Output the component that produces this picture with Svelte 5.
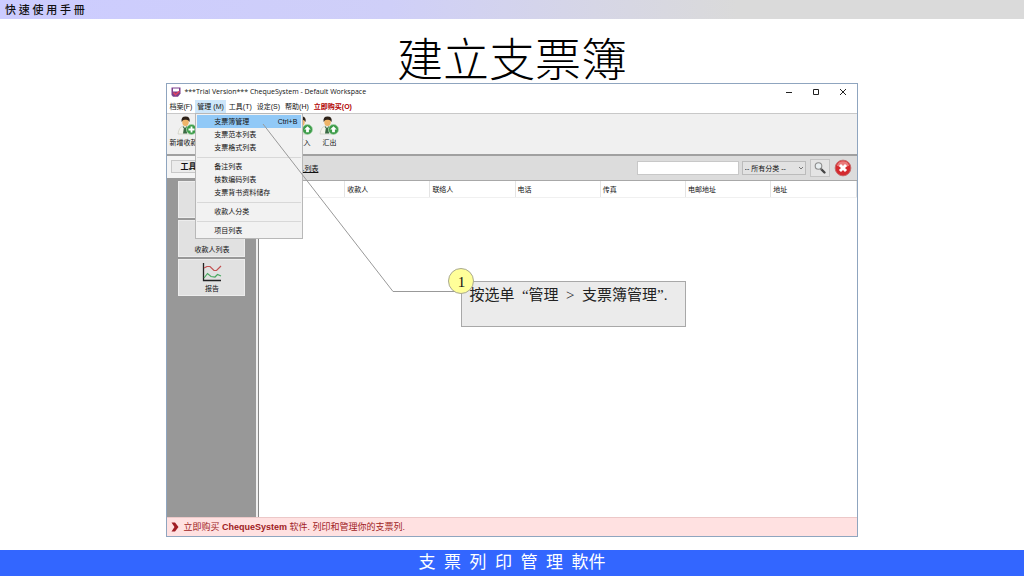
<script lang="ts">
	type MenuItem = { label: string; shortcut?: string; active?: boolean };

	const menus = ['工具(T)', '设定(S)', '帮助(H)'];

	const groups: MenuItem[][] = [
		[{ label: '支票簿管理', shortcut: 'Ctrl+B', active: true }, { label: '支票范本列表' }, { label: '支票格式列表' }],
		[{ label: '备注列表' }, { label: '核数编码列表' }, { label: '支票背书资料储存' }],
		[{ label: '收款人分类' }],
		[{ label: '项目列表' }]
	];

	const columns = ['', '收款人', '联络人', '电话', '传真', '电邮地址', '地址'];

	let query = $state('');
	let category = $state('all');
</script>

{#snippet person(sign: string)}
	<svg class="person" viewBox="0 0 20 20" aria-hidden="true">
		<path d="M1 18q1-7 5-8h4q5 1 5 8z" fill="#f4f4ec" stroke="#c4c4b8" stroke-width=".6" />
		<path d="M6 10l2 2L10 10l.4 1.200-1 1 .7 5.300H6l.8-5.300-1-1z" fill="#3c6b46" />
		<ellipse cx="8.500" cy="5.800" rx="3.300" ry="4.200" fill="#efb468" />
		<path d="M4.600 6Q3.800.6 8.600.6T12.600 6Q11 3.300 8.500 3.800 6 3.300 4.600 6z" fill="#2c2118" />
		<circle cx="14.500" cy="13.500" r="5" fill="#3c9b49" stroke="#a9d8ad" stroke-width=".7" />
		{#if sign === 'plus'}
			<path d="M14.500 10.500v6M11.500 13.500h6" stroke="#fff" stroke-width="1.800" />
		{:else}
			<path d="M14.500 10.200l3.300 3.400h-1.900v2.600h-2.800v-2.600h-1.900z" fill="#fff" />
		{/if}
	</svg>
{/snippet}

<div class="page">
	<header class="top">快 速 使 用 手 冊</header>
	<h1>建立支票簿</h1>

	<main class="window">
		<div class="titlebar">
			<svg class="logo" viewBox="0 0 10 10" aria-hidden="true">
				<path d="M.5.500h9v6L7 9.700H2L.5 8z" fill="#7b3f8c" />
				<path d="M2 1.500h6v3H2z" fill="#fff" />
				<path d="M2.500 5.500l2 2.300 4-3.600" fill="none" stroke="#e4445f" stroke-width="1.500" />
			</svg>
			<span class="caption">***Trial Version*** ChequeSystem - Default Workspace</span>
			<button aria-label="Minimize"><svg viewBox="0 0 8 8"><path d="M1 4.500h6" /></svg></button>
			<button aria-label="Maximize"><svg viewBox="0 0 8 8"><path d="M1.500 1.500h5v5h-5z" /></svg></button>
			<button aria-label="Close"><svg viewBox="0 0 8 8"><path d="M1 1l6 6M7 1L1 7" /></svg></button>
		</div>

		<nav class="menubar">
			<button>档案(F)</button>
			<div class="menu-anchor">
				<button class="open" aria-expanded="true">管理 (M)</button>
				<div class="dropdown" role="menu">
					{#each groups as group}
						<div class="group">
							{#each group as item}
								<button role="menuitem" class:active={item.active}>
									<span>{item.label}</span>
									{#if item.shortcut}<span>{item.shortcut}</span>{/if}
								</button>
							{/each}
						</div>
					{/each}
				</div>
			</div>
			{#each menus as menu}
				<button>{menu}</button>
			{/each}
			<button class="buy">立即购买(O)</button>
		</nav>

		<div class="toolbar">
			<button>{@render person('plus')}新增收款人</button>
			<button class="import">{@render person('up')}汇入</button>
			<button>{@render person('up')}汇出</button>
		</div>

		<div class="body">
			<aside>
				<div class="tab"><span>工具列</span></div>
				<div class="tools">
					<button aria-label="支票"></button>
					<button>收款人列表</button>
					<button>
						<svg class="chart" viewBox="0 0 20 20" aria-hidden="true">
							<path d="M1.500 1v17.500H19" fill="none" stroke="#222" stroke-width="1.300" />
							<path d="M2 6l3-1.500h3l4 4h2.500L19 4" fill="none" stroke="#c25050" stroke-width="1.200" />
							<path d="M2 16l3.500-4.500L9 14.500l4 .5 2.500-2.500L19 14" fill="none" stroke="#48a860" stroke-width="1.200" />
						</svg>
						报告
					</button>
				</div>
			</aside>

			<section>
				<div class="filter">
					<a href="#payees">收款人列表</a>
					<input type="text" aria-label="搜寻" bind:value={query} />
					<div class="select">
						<select aria-label="分类" bind:value={category}>
							<option value="all">-- 所有分类 --</option>
						</select>
						<svg viewBox="0 0 6 6" aria-hidden="true"><path d="M1 2l2 2 2-2" /></svg>
					</div>
					<button class="search" aria-label="搜寻">
						<svg viewBox="0 0 14 14">
							<path d="M8.500 8.500l3 3" stroke="#444" stroke-width="2.400" stroke-linecap="round" />
							<circle cx="5.500" cy="5" r="3.300" fill="#e8eef0" stroke="#8c8c8c" stroke-width="1.100" />
							<path d="M7.500 7.200l1.200 1.300" stroke="#777" stroke-width="1.200" />
						</svg>
					</button>
					<button class="clear" aria-label="清除">
						<svg viewBox="0 0 16 16">
							<circle cx="8" cy="8" r="7" fill="#d42a2e" stroke="#c46a6a" stroke-width=".8" />
							<path d="M2.500 6a5.800 5.800 0 0111 0Q8 8.500 2.500 6z" fill="#ea7c7c" />
							<path d="M5.300 5.300l5.400 5.400M10.700 5.300l-5.400 5.400" stroke="#fff" stroke-width="2.600" />
						</svg>
					</button>
				</div>
				<table>
					<thead>
						<tr>
							{#each columns as column}
								<th scope="col">{column}</th>
							{/each}
						</tr>
					</thead>
				</table>
			</section>
		</div>

		<div class="status">
			<svg viewBox="0 0 8 10" aria-hidden="true"><path d="M.5.500H4L7.500 5 4 9.500H.5L3.500 5z" fill="#a01c24" /></svg>
			<span>立即购买 <b>ChequeSystem</b> 软件. 列印和管理你的支票列.</span>
		</div>

		<svg class="leader" viewBox="0 0 200 170" aria-hidden="true"><path d="M1 1l130 167.500h68" /></svg>
		<div class="callout">
			<span class="step">1</span>
			<p>按选单&nbsp; “管理&nbsp; &gt; &nbsp;支票簿管理”.</p>
		</div>
	</main>

	<footer>支&ensp;票&ensp;列&ensp;印&ensp;管&ensp;理&ensp;軟件</footer>
</div>

<style>
	:global(body) {
		background: #fff;
	}
	.page {
		display: flex;
		flex-direction: column;
		min-height: 100vh;
		color: #111;
		font: 7px/13px 'Liberation Sans', 'Noto Sans CJK SC', sans-serif;
	}
	button,
	input,
	select {
		margin: 0;
		padding: 0;
		border: 0;
		background: none;
		color: inherit;
		font: inherit;
	}
	svg {
		display: block;
	}
	.top {
		padding: 1px 5px 0;
		background: linear-gradient(90deg, #ccf 0%, #cfcff8 38%, #d6d6e6 58%, #dadada 72%, #dadada 100%);
		font: 500 11px/18px 'Liberation Serif', 'Noto Sans CJK TC', serif;
	}
	h1 {
		margin: 10px 0 0;
		color: #000;
		text-align: center;
		font: 300 46px/54px 'Noto Sans CJK SC', sans-serif;
	}

	.window {
		position: relative;
		flex: 1;
		display: flex;
		flex-direction: column;
		box-sizing: border-box;
		width: 67.5%;
		margin: 0 auto 13px;
		border: 1px solid #8fa5bf;
	}
	.titlebar {
		display: flex;
		align-items: center;
		height: 16px;
		padding: 0 5px 0 4px;
	}
	.logo {
		width: 10px;
		height: 10px;
		margin-right: 3px;
	}
	.caption {
		flex: 1;
		font: 7px/16px 'Open Sans', sans-serif;
	}
	.titlebar button {
		width: 17px;
		margin-left: 10px;
	}
	.titlebar button svg {
		width: 8px;
		height: 8px;
		margin: 0 auto;
		fill: none;
		stroke: #222;
		stroke-width: 1;
	}

	.menubar {
		display: flex;
		gap: 1px;
		height: 13px;
		border-bottom: 1px solid #c8c8c8;
	}
	.menubar button {
		padding: 0 2px;
		white-space: nowrap;
	}
	.menu-anchor {
		position: relative;
	}
	.menubar .open {
		background: #cde6fa;
	}
	.menubar .buy {
		color: #b00000;
		font-weight: bold;
	}
	.dropdown {
		position: absolute;
		z-index: 2;
		top: 13px;
		left: 0;
		box-sizing: border-box;
		width: 108px;
		padding: 1px;
		border: 1px solid #b8b8b8;
		background: #f2f2f2;
	}
	.group + .group {
		margin-top: 3px;
		padding-top: 2px;
		border-top: 1px solid #d8d8d8;
	}
	.dropdown button {
		display: flex;
		justify-content: space-between;
		width: 100%;
		padding: 0 4px 0 17px;
	}
	.dropdown .active {
		background: #91c9f7;
	}

	.toolbar {
		display: flex;
		box-sizing: border-box;
		height: 42px;
		padding: 2px 2px 0;
		border-bottom: 2px solid #a0a0a0;
		background: #f0f0f0;
	}
	.toolbar button {
		display: flex;
		flex-direction: column;
		align-items: center;
		min-width: 26px;
	}
	.toolbar .import {
		margin-left: 86px;
	}
	.person {
		width: 20px;
		height: 20px;
	}

	.body {
		flex: 1;
		display: flex;
	}
	aside {
		display: flex;
		flex-direction: column;
		width: 89px;
		border-right: 2px solid #f0f0f0;
	}
	.tab {
		padding: 4px 4px 5px;
		background: #f4f4f4;
	}
	.tab span {
		display: block;
		padding-left: 8px;
		border: 1px solid #c8c8c8;
		background: #ececec;
		font-weight: bold;
		font-size: 8px;
		line-height: 11px;
	}
	.tools {
		flex: 1;
		display: flex;
		flex-direction: column;
		gap: 2px;
		padding: 3px 11px;
		background: #989898;
	}
	.tools button {
		display: flex;
		flex-direction: column;
		align-items: center;
		justify-content: flex-end;
		box-sizing: border-box;
		height: 37px;
		border: 1px solid #ededed;
		background: #e1e1e1;
	}
	.chart {
		width: 20px;
		height: 20px;
	}

	section {
		flex: 1;
		border-left: 1px solid #888;
	}
	.filter {
		display: flex;
		align-items: center;
		box-sizing: border-box;
		height: 25px;
		padding: 0 5px 0 4px;
		border-bottom: 1px solid #a8a8a8;
		background: #dcdcdc;
	}
	.filter a {
		margin-left: 20px;
		color: #111;
	}
	.filter input {
		box-sizing: border-box;
		width: 102px;
		height: 14px;
		margin-left: auto;
		border: 1px solid #c8c8c8;
		background: #fff;
	}
	.select {
		position: relative;
		margin: 0 4px 0 3px;
	}
	.select select {
		appearance: none;
		box-sizing: border-box;
		width: 64px;
		height: 14px;
		padding-left: 2px;
		border: 1px solid #bbb;
		background: #e2e2e2;
	}
	.select svg {
		position: absolute;
		top: 4px;
		right: 2px;
		width: 6px;
		height: 6px;
		fill: none;
		stroke: #777;
		pointer-events: none;
	}
	.search {
		box-sizing: border-box;
		height: 18px;
		margin-right: 4px;
		padding: 0 2px;
		border: 1px solid #c4c4c4;
		background: #e4e4e4;
	}
	.search svg {
		width: 14px;
		height: 14px;
	}
	.clear svg {
		width: 18px;
		height: 18px;
	}
	table {
		width: 100%;
		table-layout: fixed;
		border-collapse: collapse;
	}
	th {
		height: 16px;
		padding: 0 0 0 2px;
		border-right: 1px solid #e4e4e4;
		border-bottom: 1px solid #f0f0f0;
		font-weight: normal;
		text-align: left;
	}

	.status {
		display: flex;
		align-items: center;
		gap: 4px;
		height: 18px;
		padding: 0 4px;
		border-top: 1px solid #ecc8c8;
		background: #ffe1e1;
		color: #a01c24;
		font-size: 9px;
	}
	.status svg {
		width: 8px;
		height: 10px;
	}

	.leader {
		position: absolute;
		z-index: 3;
		top: 39px;
		left: 95px;
		width: 200px;
		height: 170px;
		fill: none;
		stroke: #999;
		stroke-width: 1;
		pointer-events: none;
	}
	.callout {
		position: absolute;
		z-index: 4;
		top: 197px;
		left: 294px;
		box-sizing: border-box;
		width: 225px;
		height: 46px;
		padding: 3px 7px;
		border: 1px solid #a8a8a8;
		background: #ebebeb;
	}
	.callout p {
		margin: 0;
		color: #222;
		white-space: nowrap;
		font: 15px/20px 'Liberation Serif', 'Noto Sans CJK SC', serif;
	}
	.step {
		position: absolute;
		top: -14px;
		left: -14px;
		box-sizing: border-box;
		width: 26px;
		height: 26px;
		border: 1px solid #a8a890;
		border-radius: 50%;
		background: #ff9;
		text-align: center;
		font: 15px/26px 'Liberation Serif', serif;
	}

	footer {
		background: #36f;
		color: #fff;
		text-align: center;
		font: 17px/26px 'Liberation Serif', 'Noto Sans CJK TC', serif;
	}
</style>
